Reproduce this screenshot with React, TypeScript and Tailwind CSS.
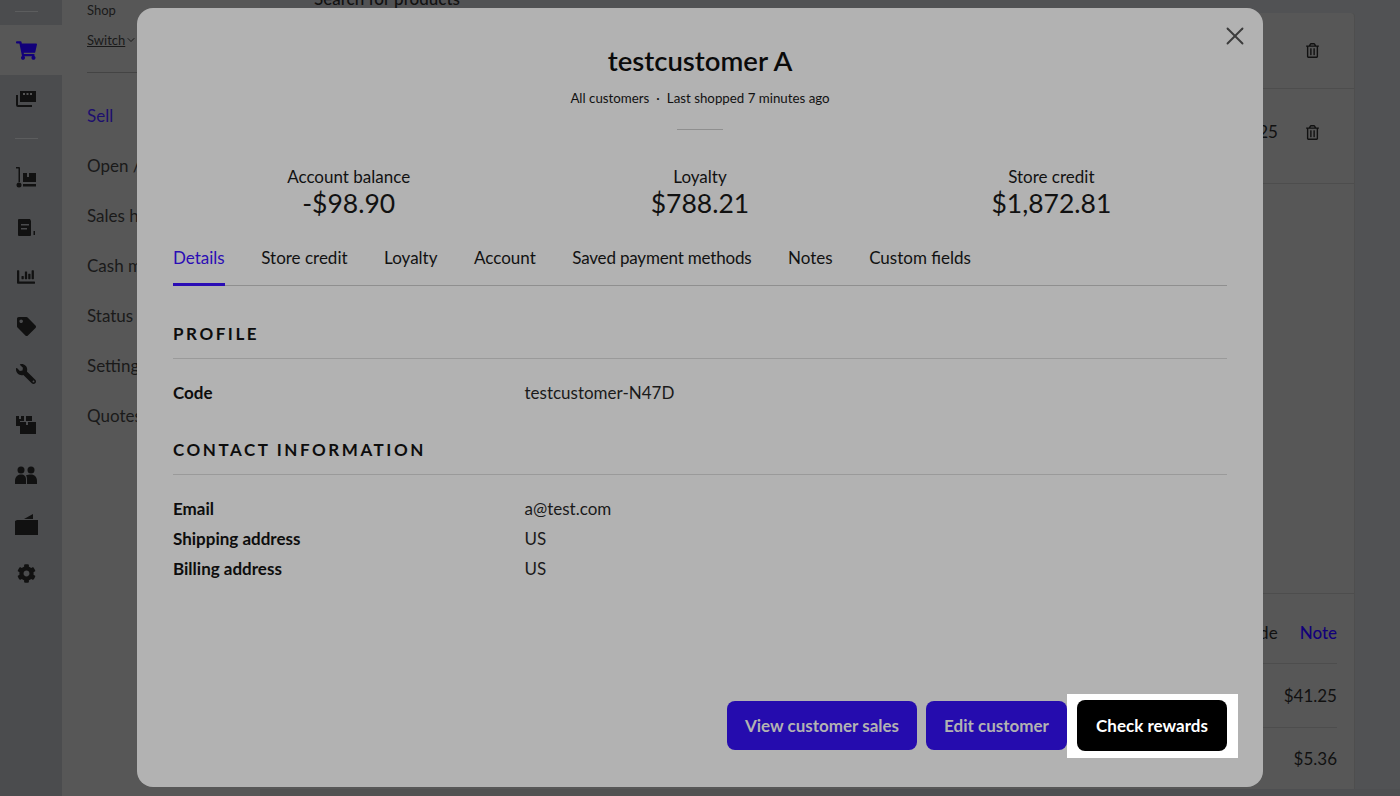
import { ChevronDown, X } from "lucide-react";
import { FaChartBar, FaCog, FaRegTrashAlt, FaShoppingCart, FaTag, FaWrench } from "react-icons/fa";

const NAV = ["Sell", "Open / Parked", "Sales history", "Cash management", "Status", "Settings", "Quotes"];
const TABS = ["Details", "Store credit", "Loyalty", "Account", "Saved payment methods", "Notes", "Custom fields"];
const STATS = [
  { label: "Account balance", value: "-$98.90" },
  { label: "Loyalty", value: "$788.21" },
  { label: "Store credit", value: "$1,872.81" },
];

function StackIcon() {
  return (
    <svg viewBox="0 0 20 16" className="h-4 w-5" fill="#111">
      <path d="M4 0h16v11H4z" />
      <path d="M0 4h2v10h14v2H2a2 2 0 0 1-2-2z" />
      <path d="M7 2h2v2H7zM10.500 2h2v2h-2zM14 2h2v2h-2z" fill="#555" />
    </svg>
  );
}

function DollyIcon() {
  return (
    <svg viewBox="0 0 20 21" className="h-[21px] w-5" fill="#111">
      <path d="M0 0h3a1 1 0 0 1 1 1v14H2.500V1.500H0z" />
      <circle cx="3" cy="18" r="2.500" />
      <path d="M7 17h13v2.500H7zM7 6h4v4h2V6h7v9H7z" />
    </svg>
  );
}

function ReceiptIcon() {
  return (
    <svg viewBox="0 0 19 18" className="h-[18px] w-[19px]" fill="#111">
      <path d="M1 2a1 1 0 0 1 1-1h11l1 2v14a1 1 0 0 1-1 1H2a1 1 0 0 1-1-1z" />
      <path d="M4 6h8v1.500H4zM4 10h6v1.500H4z" fill="#4a4b4d" />
      <path d="M16.500 13H18v4h-1.500z" />
    </svg>
  );
}

function BoxesIcon() {
  return (
    <svg viewBox="0 0 20 18" className="h-[18px] w-5" fill="#111">
      <path d="M0 0h3v3h2V0h3v5h-4v5H0zM10 0h6v5h-6z" />
      <path d="M4 6h6v3h2V6h8v12H4z" />
    </svg>
  );
}

function PeopleIcon() {
  return (
    <svg viewBox="0 0 22 18" className="h-[18px] w-[22px]" fill="#111">
      <circle cx="6" cy="4" r="3.500" />
      <circle cx="16" cy="4" r="3.500" />
      <path d="M0 18v-3c0-4 2.500-6.500 6-6.500s5 2 5 5v4.500z" />
      <path d="M12 18v-4.500c0-2-.5-3.500-1-4.200 1.300-.6 3-.8 5-.8 3.500 0 6 2.500 6 6.500v3z" />
    </svg>
  );
}

function WalletIcon() {
  return (
    <svg viewBox="0 0 23 21" className="h-[21px] w-[23px]" fill="#111">
      <path d="M9 5l9-5v5z" />
      <path d="M0 7l2-1h21v15H0z" />
    </svg>
  );
}

const SIDE_ICONS = [
  <DollyIcon />,
  <ReceiptIcon />,
  <FaChartBar className="h-[18px] w-[18px]" />,
  <FaTag className="h-[19px] w-[19px]" />,
  <FaWrench className="-mt-[4px] h-[20px] w-[20px] -scale-x-100" />,
  <BoxesIcon />,
  <PeopleIcon />,
  <WalletIcon />,
  <FaCog className="h-[19px] w-[19px]" />,
];

function Sidebar() {
  return (
    <div className="flex w-[62px] shrink-0 flex-col bg-[#4b4c4e]">
      <div className="flex h-[25px] items-start justify-center pr-[10px] pt-[11px]">
        <div className="h-px w-[23px] bg-[#5c5d5e]" />
      </div>
      <div className="flex h-[50px] items-center justify-center bg-[#575757] pr-[10px]">
        <FaShoppingCart className="h-[19px] w-[21px] text-[#12007a]" />
      </div>
      <div className="flex h-[48px] items-center justify-center pr-[10px]">
        <StackIcon />
      </div>
      <div className="flex h-[30px] items-center justify-center pr-[10px] pt-[1px]">
        <div className="h-px w-[23px] bg-[#5c5d5e]" />
      </div>
      <div className="flex flex-col pr-[10px] text-[#111]">
        {SIDE_ICONS.map((icon, i) => (
          <div key={i} className="flex h-[49.5px] items-center justify-center">
            {icon}
          </div>
        ))}
      </div>
    </div>
  );
}

function NavPanel() {
  return (
    <div className="w-[198px] shrink-0 overflow-hidden bg-[#575757] pl-[25px] text-[#1a1a1a]">
      <div className="text-[13px] leading-[20px]">Shop</div>
      <div className="mt-[10px] flex items-center text-[13px] leading-[20px]">
        <span className="underline">Switch</span>
        <ChevronDown className="h-3 w-3" />
      </div>
      <div className="mb-[32px] mt-[22px] h-px bg-[#444]" />
      <div className="flex flex-col gap-[28px] whitespace-nowrap text-[17px] leading-[22px]">
        {NAV.map((item, i) => (
          <div key={item} className={i === 0 ? "text-[#1d0f6e]" : ""}>
            {item}
          </div>
        ))}
      </div>
    </div>
  );
}

function MainBehind() {
  return (
    <div className="min-w-0 flex-1 bg-[#515254]">
      <div className="-mt-[11px] pl-[54px] text-[17px] font-medium leading-[20px] text-[#111]">Search for products</div>
      <div className="mr-[45px] mt-[4px] rounded-t-[4px] border-r border-[#4e4e4e] bg-[#575757]">
        <div className="flex h-[76px] items-center justify-end border-b border-[#4d4d4d] pr-[35px]">
          <FaRegTrashAlt className="h-[15px] w-[13px] text-[#111]" />
        </div>
        <div className="flex h-[95px] items-center justify-end border-b border-[#4d4d4d] pb-[8px] pr-[35px]">
          <span className="mr-[28px] text-[17px] text-[#111]">$41.25</span>
          <FaRegTrashAlt className="h-[15px] w-[13px] text-[#111]" />
        </div>
        <div className="h-[409px]" />
        <div className="h-[196px] border-t border-[#4d4d4d] pl-[860px] pr-[17px] text-[17px] text-[#111]">
          <div className="flex h-[70px] items-center justify-end gap-[22px] border-b border-[#4d4d4d] pt-[8px]">
            <span>Code</span>
            <span className="font-medium text-[#12007a]">Note</span>
          </div>
          <div className="flex h-[64px] items-center justify-end border-b border-[#4d4d4d]">$41.25</div>
          <div className="flex h-[62px] items-center justify-end">$5.36</div>
        </div>
      </div>
      <div className="flex h-[7px]">
        <div className="w-[600px] bg-[#525252]" />
        <div className="flex-1 bg-[#4e4f51]" />
      </div>
    </div>
  );
}

function SectionTitle({ children }: { children: string }) {
  return (
    <div className="border-b border-[#9a9a9a] pb-[13px] text-[17px] font-bold uppercase leading-[22px] tracking-[0.15em] text-[#0d0d0d]">
      {children}
    </div>
  );
}

function InfoRow({ label, value }: { label: string; value: string }) {
  return (
    <div className="flex h-[30px] items-center text-[17px]">
      <div className="w-[351.500px] font-bold text-[#0d0d0d]">{label}</div>
      <div className="text-[#1a1a1a]">{value}</div>
    </div>
  );
}

function CustomerModal() {
  return (
    <div className="absolute bottom-[9px] left-[137px] top-[8px] flex w-[1126px] flex-col rounded-[16px] bg-[#b2b2b2] px-[36px] text-[#111]">
      <button className="absolute right-[13px] top-[13px] text-[#3c3c3c]">
        <X className="h-[30px] w-[30px]" strokeWidth={1.5} />
      </button>
      <div className="mt-[34px] text-center text-[27.500px] font-semibold leading-[38px] text-[#0a0a0a]">testcustomer A</div>
      <div className="mt-[8px] flex justify-center gap-[7px] text-[13.300px] leading-[20px]">
        <span>All customers</span>
        <span>·</span>
        <span>Last shopped 7 minutes ago</span>
      </div>
      <div className="mx-auto mt-[21px] h-px w-[46px] bg-[#8f8f8f]" />
      <div className="mt-[37px] grid grid-cols-3 text-center">
        {STATS.map((s) => (
          <div key={s.label} className="flex flex-col items-center">
            <div className="text-[17px] leading-[20px]">{s.label}</div>
            <div className="text-[26.500px] leading-[33px]">{s.value}</div>
          </div>
        ))}
      </div>
      <div className="mt-[20px] flex gap-[36.500px] border-b border-[#8f8f8f] text-[17px]">
        {TABS.map((tab, i) => (
          <div
            key={tab}
            className={
              i === 0
                ? "-mb-px h-[46px] border-b-[3px] border-[#2a0cb5] pt-[5px] text-[#2a0cb5]"
                : tab === "Saved payment methods"
                  ? "h-[45px] pt-[5px] tracking-[-0.18px]"
                  : "h-[45px] pt-[5px]"
            }
          >
            {tab}
          </div>
        ))}
      </div>
      <div className="mt-[37px]">
        <SectionTitle>Profile</SectionTitle>
      </div>
      <div className="mt-[19px]">
        <InfoRow label="Code" value="testcustomer-N47D" />
      </div>
      <div className="mt-[31px]">
        <SectionTitle>Contact information</SectionTitle>
      </div>
      <div className="mt-[19px]">
        <InfoRow label="Email" value="a@test.com" />
        <InfoRow label="Shipping address" value="US" />
        <InfoRow label="Billing address" value="US" />
      </div>
      <div className="-mr-[11px] mb-[29px] mt-auto flex items-start justify-end text-[17px] font-bold">
        <button className="mr-[9px] mt-[7px] h-[49px] w-[190px] rounded-[8px] bg-[#250cae] text-[#b2b2b2]">View customer sales</button>
        <button className="mt-[7px] h-[49px] w-[141px] rounded-[8px] bg-[#250cae] text-[#b2b2b2]">Edit customer</button>
        <div className="bg-white pb-[7px] pl-[10px] pr-[11px] pt-[6px]">
          <button className="block h-[51px] w-[150px] rounded-[8px] bg-black text-white">Check rewards</button>
        </div>
      </div>
    </div>
  );
}

export default function App() {
  return (
    <div className="relative flex h-[796px] w-[1400px] overflow-hidden font-['Lato',sans-serif]">
      <Sidebar />
      <NavPanel />
      <MainBehind />
      <CustomerModal />
    </div>
  );
}
